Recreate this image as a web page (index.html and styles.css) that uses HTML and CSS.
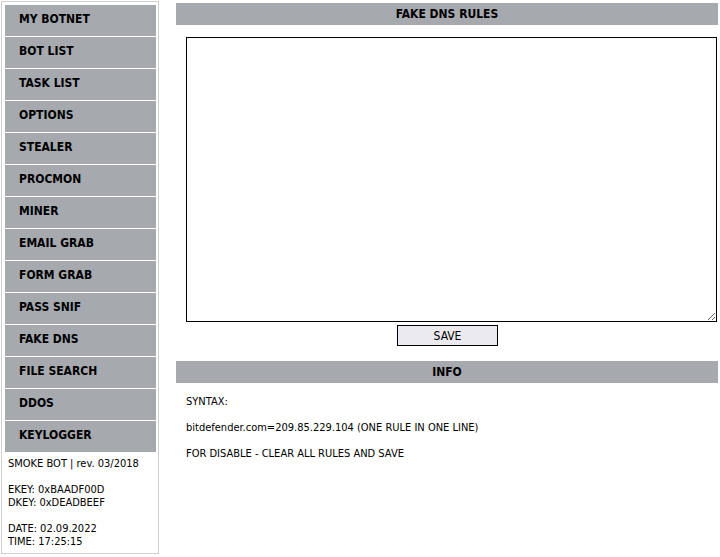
FILE: index.html
```html
<!DOCTYPE html>
<html>
<head>
<meta charset="utf-8">
<link rel="stylesheet" href="styles.css">
</head>
<body>
<div class="page">
  <div class="sidebar">
    <div class="menu">
      <div class="item">MY BOTNET</div>
      <div class="item">BOT LIST</div>
      <div class="item">TASK LIST</div>
      <div class="item">OPTIONS</div>
      <div class="item">STEALER</div>
      <div class="item">PROCMON</div>
      <div class="item">MINER</div>
      <div class="item">EMAIL GRAB</div>
      <div class="item">FORM GRAB</div>
      <div class="item">PASS SNIF</div>
      <div class="item">FAKE DNS</div>
      <div class="item">FILE SEARCH</div>
      <div class="item">DDOS</div>
      <div class="item">KEYLOGGER</div>
    </div>
    <div class="about">
      <p>SMOKE BOT | rev. 03/2018</p>
      <p>EKEY: 0xBAADF00D<br>DKEY: 0xDEADBEEF</p>
      <p>DATE: 02.09.2022<br>TIME: 17:25:15</p>
    </div>
  </div>
  <div class="main">
    <div class="bar">FAKE DNS RULES</div>
    <div class="form">
      <textarea class="rules"></textarea>
      <button class="save">SAVE</button>
    </div>
    <div class="bar">INFO</div>
    <div class="info">
      <p>SYNTAX:</p>
      <p>bitdefender.com=209.85.229.104 (ONE RULE IN ONE LINE)</p>
      <p>FOR DISABLE - CLEAR ALL RULES AND SAVE</p>
    </div>
  </div>
</div>
</body>
</html>
```
FILE: styles.css
```css
html, body {
  margin: 0;
  padding: 0;
  background: #ffffff;
}
body {
  font-family: "DejaVu Sans Condensed", "DejaVu Sans", sans-serif;
  font-size: 11px;
  color: #000000;
}
.page {
  display: flex;
  align-items: flex-start;
  padding: 1px 0 0 1px;
}
.sidebar {
  width: 156px;
  height: 551px;
  border: 1px solid #cfcfcf;
  box-sizing: content-box;
  padding: 0;
}
.menu {
  display: flex;
  flex-direction: column;
  gap: 1px;
  padding: 3px 2px 0 3px;
}
.item {
  height: 31px;
  background: #a6a9ad;
  font-weight: bold;
  font-size: 12px;
  line-height: 29px;
  padding-left: 14px;
  box-sizing: border-box;
}
.about {
  padding: 5px 0 0 6px;
  line-height: 13px;
}
.about p {
  margin: 0 0 13px 0;
}
.main {
  margin-left: 17px;
  margin-top: 2px;
  width: 542px;
}
.bar {
  height: 22px;
  background: #a6a9ad;
  font-weight: bold;
  font-size: 12px;
  text-align: center;
  line-height: 22px;
}
.form {
  display: flex;
  flex-direction: column;
  align-items: center;
  padding: 12px 0 15px 9px;
}
.rules {
  width: 531px;
  height: 285px;
  box-sizing: border-box;
  border: 1px solid #000000;
  margin: 0;
  padding: 2px;
  resize: both;
  font-family: inherit;
  font-size: 11px;
}
.save {
  margin: 3px 0 0 -8px;
  width: 101px;
  height: 21px;
  background: #ebeaf0;
  border: 1px solid #000000;
  font-family: inherit;
  font-size: 12px;
  padding: 0;
  color: #000000;
}
.info {
  padding: 12px 0 0 10px;
  line-height: 13px;
}
.info p {
  margin: 0 0 13px 0;
}
```
